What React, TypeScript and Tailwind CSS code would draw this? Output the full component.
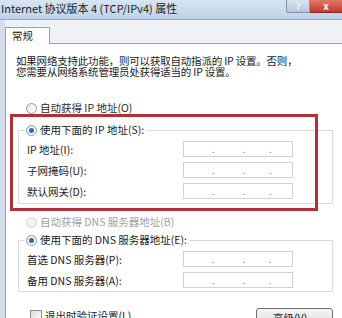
import React from "react";

const font = {
  fontFamily: '"Noto Sans CJK SC", "Liberation Sans", sans-serif',
};

function Radio({ checked, disabled }: { checked?: boolean; disabled?: boolean }) {
  return (
    <span
      className={
        "relative inline-flex h-[11px] w-[11px] shrink-0 items-center justify-center rounded-full border " +
        (disabled
          ? "border-[#d4d4d4] bg-[#f2f2f2]"
          : "border-[#9a9a9a] bg-gradient-to-br from-[#e4e4e4] to-white")
      }
    >
      {checked && <span className="h-[5px] w-[5px] rounded-full bg-[#2f6cb0]" />}
    </span>
  );
}

function IpBox() {
  return (
    <div className="flex h-[16px] w-[110px] items-end border border-[#d2d2d2] bg-white pb-[2px] text-[9px] leading-none text-[#7a7a7a]">
      <span className="w-[28px]" />
      <span>.</span>
      <span className="w-[28px]" />
      <span>.</span>
      <span className="w-[24px]" />
      <span>.</span>
    </div>
  );
}

function Row({ label }: { label: string }) {
  return (
    <div className="flex h-[21px] items-center">
      <span className="w-[156px] pt-[2px]">{label}</span>
      <IpBox />
    </div>
  );
}

export default function App() {
  return (
    <div
      className="relative h-[318px] w-[342px] overflow-hidden bg-[#eef2f7] text-[10.5px] text-[#1a1a1a]"
      style={font}
    >
      {/* title bar */}
      <div className="flex h-[20px] items-start justify-between border-b border-[#93a9c4] bg-gradient-to-b from-[#d8e5f2] to-[#bed2e8]">
        <span className="pl-[1px] pt-[2px] text-[11px] leading-[13px] text-[#1a1a1a]">
          Internet 协议版本 4 (TCP/IPv4) 属性
        </span>
        <div className="flex">
          <div className="flex h-[13px] w-[24px] items-center justify-center rounded-bl-[3px] border border-t-0 border-[#7e93b2] bg-gradient-to-b from-[#d9e4f1] to-[#b6c8de] text-[9px] font-bold leading-none text-[#eef4fb]">
            ?
          </div>
          <div className="flex h-[13px] w-[32px] items-center justify-center border-b border-[#8c2a22] bg-gradient-to-b from-[#e0796a] to-[#c0392b] text-[10px] font-bold leading-none text-white">
            x
          </div>
        </div>
      </div>

      <div className="flex">
        <div className="w-[5px] self-stretch bg-[#d3dfec]" />
        <div className="flex-1 pt-[7px]">
          {/* tab */}
          <div className="flex">
            <div className="h-[17px] w-[45px] border border-b-0 border-[#a0a0a0] bg-white pl-[6px] text-[10.5px] leading-[16px]">
              常规
            </div>
          </div>
          {/* panel */}
          <div className="-mt-px h-[300px] border-l border-t border-[#a0a0a0] bg-white pl-[10px] pt-[11px]">
            <p className="leading-[11px] tracking-[-0.2px]">
              如果网络支持此功能，则可以获取自动指派的 IP 设置。否则，
              <br />
              您需要从网络系统管理员处获得适当的 IP 设置。
            </p>

            <div className="mt-[23px] flex h-[16px] items-center gap-[3px] pl-[10px] text-[#2a2a2a]">
              <Radio />
              <span>自动获得 IP 地址(O)</span>
            </div>

            <fieldset className="mr-[9px] ml-[2px] mt-[6px] border border-[#dadada] px-[8px] pb-[2px]">
              <legend className="-ml-[3px] flex h-[16px] items-center gap-[3px] px-[2px]">
                <Radio checked />
                <span>使用下面的 IP 地址(S):</span>
              </legend>
              <Row label="IP 地址(I):" />
              <Row label="子网掩码(U):" />
              <Row label="默认网关(D):" />
            </fieldset>

            <div className="mt-[10px] flex h-[16px] items-center gap-[3px] pl-[10px] text-[#a0a0a0]">
              <Radio disabled />
              <span>自动获得 DNS 服务器地址(B)</span>
            </div>

            <fieldset className="mr-[9px] ml-[2px] mt-[2px] border border-[#dadada] px-[8px] pb-[1px]">
              <legend className="-ml-[3px] flex h-[16px] items-center gap-[3px] px-[2px]">
                <Radio checked />
                <span>使用下面的 DNS 服务器地址(E):</span>
              </legend>
              <Row label="首选 DNS 服务器(P):" />
              <Row label="备用 DNS 服务器(A):" />
            </fieldset>

            <div className="mt-[14px] flex items-start justify-between pr-[9px]">
              <div className="flex items-center gap-[3px] pl-[14px] pt-[2px]">
                <span className="h-[12px] w-[12px] border border-[#8f8f8f] bg-gradient-to-br from-[#dcdcdc] to-white" />
                <span>退出时验证设置(L)</span>
              </div>
              <div className="mt-[2px] flex h-[20px] w-[77px] items-center justify-center rounded-[3px] border border-[#707070] bg-gradient-to-b from-[#f4f4f4] to-[#dcdcdc]">
                高级(V)...
              </div>
            </div>
          </div>
        </div>
      </div>

      {/* red annotation box */}
      <div className="absolute left-[10px] top-[114px] h-[97px] w-[308px] border-[3px] border-[#b3303a]" />
    </div>
  );
}
